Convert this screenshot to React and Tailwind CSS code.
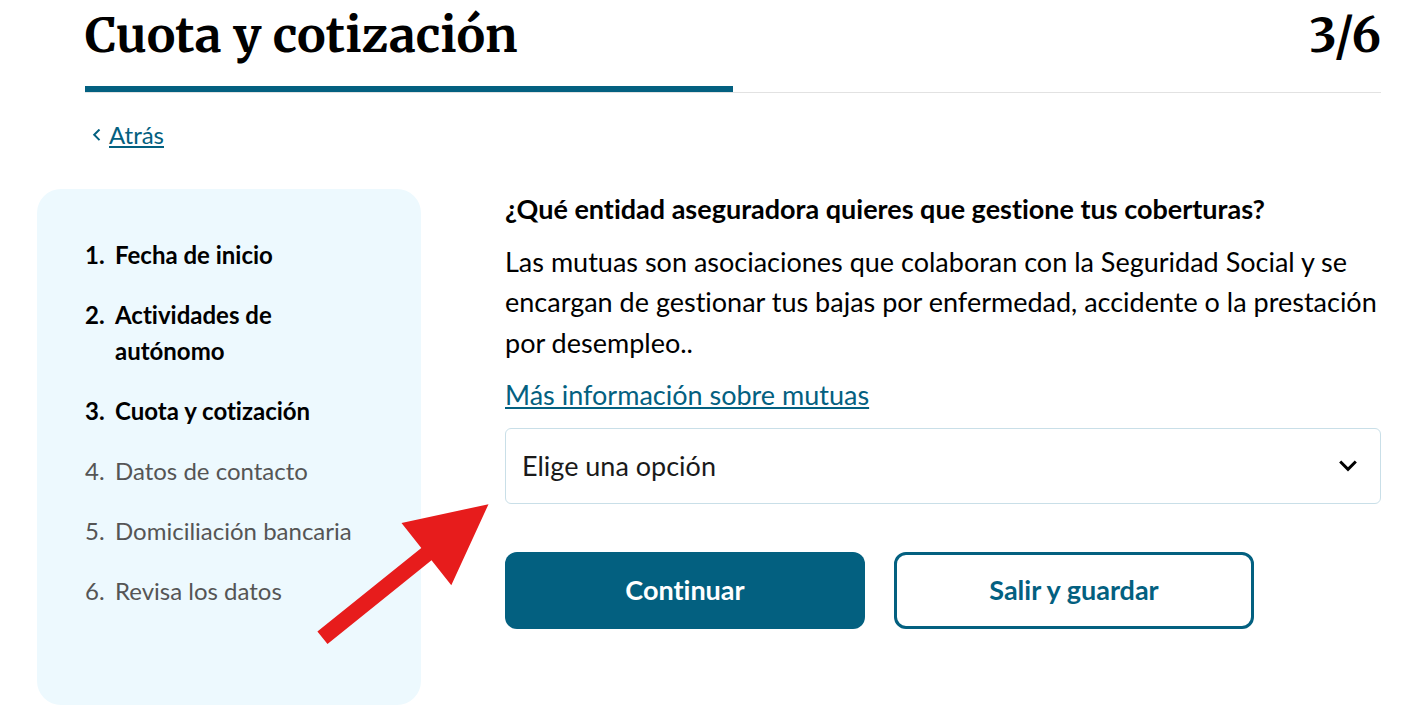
const STEPS = [
  'Fecha de inicio',
  'Actividades de autónomo',
  'Cuota y cotización',
  'Datos de contacto',
  'Domiciliación bancaria',
  'Revisa los datos',
];
const CURRENT = 3;

function Header() {
  return (
    <header className="pl-12">
      <div className="flex items-center justify-between pb-4 font-['Merriweather','DejaVu_Serif_Condensed','DejaVu_Serif',serif] text-5xl leading-[70px] font-bold">
        <h1>Cuota y cotización</h1>
        <p>3/6</p>
      </div>
      <div className="border-b border-[#e2e2e2]">
        <div
          className="h-[6px] bg-[#036080]"
          role="progressbar"
          aria-label="Progreso"
          aria-valuemin={0}
          aria-valuemax={6}
          aria-valuenow={3}
          style={{ width: `${(CURRENT / STEPS.length) * 100}%` }}
        />
      </div>
    </header>
  );
}

function Steps() {
  return (
    <aside className="w-96 shrink-0 rounded-3xl bg-[#edf9fe] px-12 pt-12 pb-24">
      <ol className="flex flex-col gap-6 text-2xl leading-9">
        {STEPS.map((label, i) => (
          <li
            key={label}
            className={i < CURRENT ? 'flex font-bold' : 'flex text-[#555555]'}
          >
            <span className="w-[30px] shrink-0">{i + 1}.</span>
            <span className={i === 1 ? 'max-w-48' : ''}>{label}</span>
          </li>
        ))}
      </ol>
    </aside>
  );
}

function Insurer() {
  return (
    <form className="min-w-0 flex-1 text-[27px] leading-normal" onSubmit={(e) => e.preventDefault()}>
      <label htmlFor="mutua" className="block font-bold">
        ¿Qué entidad aseguradora quieres que gestione tus coberturas?
      </label>
      <p className="mt-3">
        Las mutuas son asociaciones que colaboran con la Seguridad Social y se encargan de gestionar
        tus bajas por enfermedad, accidente o la prestación por desempleo..
      </p>
      <p className="mt-3">
        <a href="#mutuas" className="text-[#036080] underline decoration-2 underline-offset-2">
          Más información sobre mutuas
        </a>
      </p>
      <div className="relative mt-3">
        <select
          id="mutua"
          className="block h-[76px] w-full appearance-none rounded-md border border-[#c9dfe8] bg-white pt-px pr-16 pl-4 text-[#1a1a1a]"
        >
          <option>Elige una opción</option>
        </select>
        <svg
          className="pointer-events-none absolute top-8 right-6"
          width="18"
          height="12"
          viewBox="0 0 18 12"
          fill="none"
          stroke="#000"
          strokeWidth="3"
          aria-hidden="true"
        >
          <path d="M1.2 1.5 9 9.3l7.8-7.8" />
        </svg>
      </div>
      <div className="mt-12 flex flex-wrap gap-[29px] font-bold">
        <button type="submit" className="h-[77px] w-[360px] rounded-xl bg-[#036080] text-white">
          Continuar
        </button>
        <button
          type="button"
          className="h-[77px] w-[360px] rounded-xl border-3 border-[#036080] text-[#036080]"
        >
          Salir y guardar
        </button>
      </div>
    </form>
  );
}

export default function App() {
  return (
    <main className="bg-white pr-10 pb-6 pl-[37px] font-['Lato','Liberation_Sans',sans-serif] text-black [font-variant-ligatures:none]">
      <Header />
      <nav className="mt-6 flex pl-[55px] text-2xl leading-9 text-[#036080]">
        <a href="#atras" className="flex items-center gap-2">
          <svg width="9" height="12" viewBox="0 0 9 12" fill="none" stroke="currentColor" strokeWidth="2" aria-hidden="true">
            <path d="M7.5 .5 2.2 5.8l5.3 5.3" />
          </svg>
          <span className="underline decoration-2 underline-offset-2">Atrás</span>
        </a>
      </nav>
      <div className="relative mt-9 flex items-start gap-[84px]">
        <Steps />
        <Insurer />
        <svg
          className="pointer-events-none absolute top-[315px] left-[280px]"
          width="172"
          height="140"
          viewBox="0 0 172 140"
          aria-hidden="true"
        >
          <path
            d="M171.5 .2 134.3 81.2 114.5 56.3 10.5 140 .4 127.5 104.3 44 84.5 19Z"
            fill="#e71c1c"
          />
        </svg>
      </div>
    </main>
  );
}
